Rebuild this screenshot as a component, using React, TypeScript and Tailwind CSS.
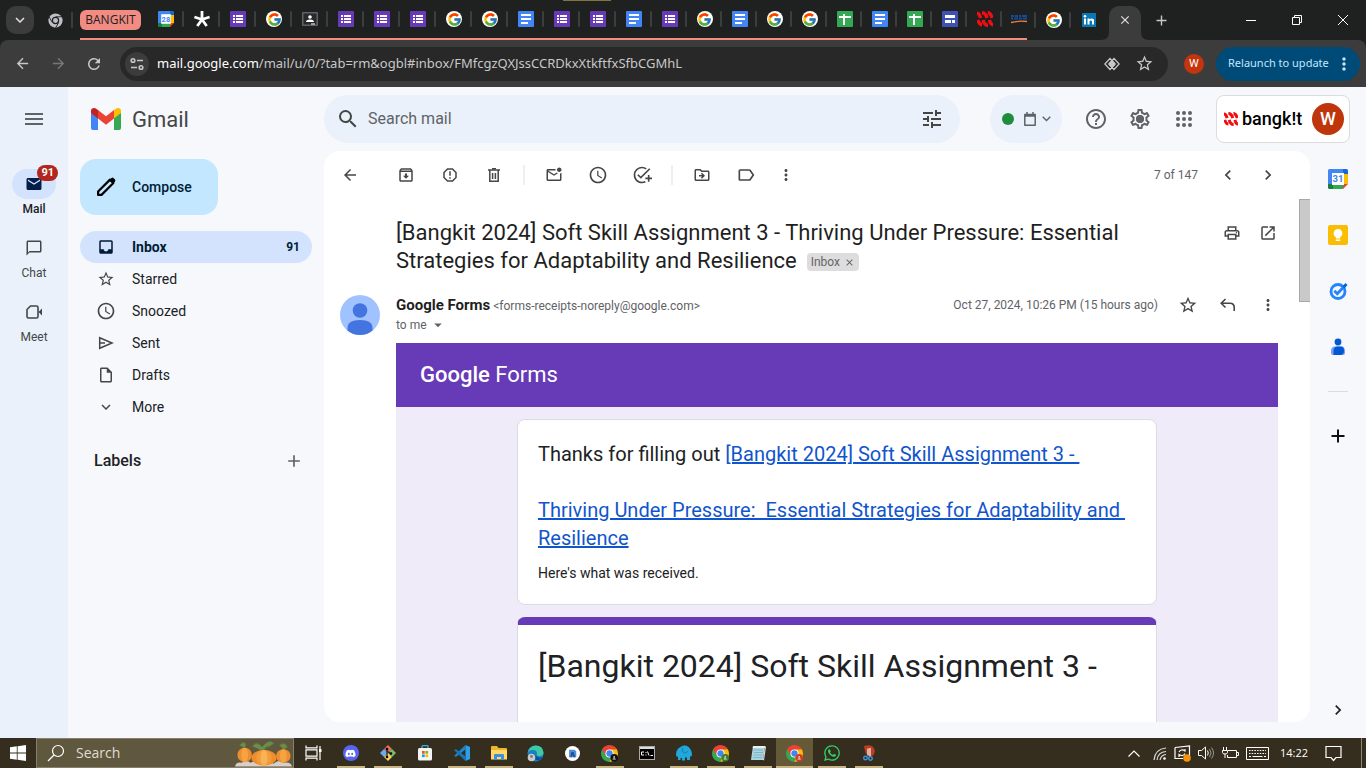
import type { ReactNode } from 'react';
import {
  MdAdd, MdArrowBack, MdArrowDropDown, MdChevronLeft, MdChevronRight, MdClose,
  MdExpandMore, MdHelpOutline, MdInbox, MdLabelOutline, MdMail, MdMenu,
  MdMoreVert, MdOpenInNew, MdOutlineAddTask, MdOutlineArchive, MdOutlineChatBubbleOutline,
  MdOutlineDriveFileMove, MdOutlineInsertDriveFile, MdOutlineMarkEmailUnread,
  MdOutlinePrint, MdOutlineSettings, MdReportGmailerrorred, MdSchedule, MdSearch,
  MdStarBorder, MdTune, MdArrowForward, MdRefresh,
} from 'react-icons/md';
import { FcGoogle } from 'react-icons/fc';
import { FaDiscord, FaWhatsapp } from 'react-icons/fa';

/* ---------- shared drawings ---------- */

function FormsIcon() {
  return (
    <svg width="16" height="16" viewBox="0 0 16 16">
      <rect width="16" height="16" rx="1" fill="#673ab7" />
      <path d="M3 4h2v2H3zM6 4h7v2H6zM3 7h2v2H3zM6 7h7v2H6zM3 10h2v2H3zM6 10h7v2H6z" fill="#fff" />
    </svg>
  );
}
function DocsIcon() {
  return (
    <svg width="16" height="16" viewBox="0 0 16 16">
      <rect width="16" height="16" rx="1" fill="#4285f4" />
      <path d="M3 3h10v2H3zM3 7h10v2H3zM3 11h7v2H3z" fill="#fff" />
    </svg>
  );
}
function SheetsIcon() {
  return (
    <svg width="16" height="16" viewBox="0 0 16 16">
      <rect width="16" height="16" rx="1" fill="#34a853" />
      <path d="M2 5h4V3h2v2h6v2H8v7H6V7H2z" fill="#fff" />
    </svg>
  );
}
function SitesIcon() {
  return (
    <svg width="16" height="16" viewBox="0 0 16 16">
      <rect width="16" height="16" rx="1" fill="#3f51b5" />
      <path d="M3 4h10v3H3zM3 9h6v3H3zM10 9h3v3h-3z" fill="#fff" />
    </svg>
  );
}
function GoogleIcon() {
  return (
    <span className="flex size-4 items-center justify-center rounded-full bg-white">
      <FcGoogle size={15} />
    </span>
  );
}
function CalendarIcon({ day, size }: { day: string; size: number }) {
  return (
    <svg width={size} height={size} viewBox="0 0 20 20">
      <path d="M1.500 0H15v5H5v10H0V1.500Q0 0 1.500 0z" fill="#4285f4" />
      <path d="M15 0h3.500Q20 0 20 1.500V5h-5z" fill="#1967d2" />
      <path d="M15 5h5v10h-5z" fill="#fbbc04" />
      <path d="M5 15h10v5H5z" fill="#34a853" />
      <path d="M0 15h5v5H1.500Q0 20 0 18.500z" fill="#188038" />
      <path d="M15 15h5l-5 5z" fill="#ea4335" />
      <path d="M4 4h12v12H4z" fill="#fff" />
      <text x="9.900" y="13.300" textAnchor="middle" fontSize="9.500" fontWeight="700" fontFamily="Roboto, sans-serif" fill="#4285f4">{day}</text>
    </svg>
  );
}
function StripesIcon({ size }: { size: number }) {
  return (
    <svg width={size} height={size} viewBox="0 0 16 16" fill="none" stroke="#f20d12" strokeWidth="3.400">
      <path d="M0 2.200q2.500 0 3.500 4.800M5 1.700q3.700 0 5 5.300M10.800 1.700q2.800 0 4.400 5.300" />
      <path d="M.8 9q1.700 4.800 4.200 4.800M6 9q1.300 5.300 5 5.300M12.500 9q1 4.800 3.500 4.800" />
    </svg>
  );
}
function AsteriskIcon() {
  return (
    <svg width="16" height="16" viewBox="0 0 16 16" stroke="#fff" strokeWidth="2.800">
      <path d="M8 8.500V0M8 8.500l7.600-2.500M8 8.500l4.700 6.500M8 8.500l-4.700 6.500M8 8.500L.4 6" />
    </svg>
  );
}
function ClassroomIcon() {
  return (
    <svg width="16" height="16" viewBox="0 0 16 16">
      <rect y="1" width="16" height="14" rx="1" fill="#5f6368" />
      <rect x="1.500" y="2.500" width="13" height="11" fill="#27292b" />
      <circle cx="8" cy="6" r="1.800" fill="#fff" />
      <path d="M4 11q0-2.500 4-2.500t4 2.500zM9 12.500h4v1H9z" fill="#fff" />
    </svg>
  );
}
function CampusIcon() {
  return (
    <svg width="16" height="16" viewBox="0 0 16 16">
      <path d="M0 5h3M4 5h3M8 5h2M11 5h5M0 7.500h2M3 7.500h4M8 7.500h3M12 7.500h4" stroke="#174a9c" strokeWidth="2" />
      <path d="M0 11.500Q8 9.500 16 10.500" stroke="#e8833a" strokeWidth="1.300" fill="none" />
    </svg>
  );
}
function LinkedInIcon() {
  return (
    <svg width="16" height="16" viewBox="0 0 16 16">
      <rect x="1" y="1" width="14" height="14" fill="#0a77b5" />
      <path d="M3 6.500h2v6H3zM6.500 6.500h2v1q2-2 4.500 0v5h-2V9q-1.200-1.200-2.500 0v3.500h-2z" fill="#fff" />
      <circle cx="4" cy="4.300" r="1.300" fill="#fff" />
    </svg>
  );
}
function ChromeIcon({ size, badge, mono }: { size: number; badge?: string; mono?: boolean }) {
  if (mono) {
    return (
      <svg width={size} height={size} viewBox="0 0 20 20">
        <circle cx="10" cy="10" r="9.500" fill="#bdc1c6" />
        <path d="M10 5h9M5.700 12.500L1.300 5M14.300 12.500L10 20" stroke="#1f2120" strokeWidth="1.200" />
        <circle cx="10" cy="10" r="4.900" fill="#1f2120" />
        <circle cx="10" cy="10" r="3.300" fill="#bdc1c6" />
      </svg>
    );
  }
  return (
    <svg width={size} height={size} viewBox="0 0 20 20">
      <path d="M10 10L1.340 5A10 10 0 0 1 18.660 5z" fill="#ea4335" />
      <path d="M10 10L18.660 5A10 10 0 0 1 10 20z" fill="#fbbc04" />
      <path d="M10 10v10A10 10 0 0 1 1.340 5z" fill="#34a853" />
      <path d="M10 5h8.660L14.300 12.500zM14.300 12.500L10 20 5.700 12.500z" fill="#fbbc04" />
      <path d="M5.700 12.500L1.340 5l-.3 6 4 6.500L10 20l1.500-5z" fill="#34a853" />
      <path d="M1.340 5L5.700 12.500 10 5h8.660L14 1.500H6z" fill="#ea4335" />
      <circle cx="10" cy="10" r="4.800" fill="#fff" />
      <circle cx="10" cy="10" r="3.700" fill="#4285f4" />
      {badge && <circle cx="15.500" cy="15" r="4.500" fill={badge} />}
      {badge && <path d="M13.500 17q0-1.500 2-1.500t2 1.500zM14.500 14a1 1 0 1 0 2 0 1 1 0 1 0-2 0" fill="#ddd" />}
    </svg>
  );
}

/* ---------- browser chrome ---------- */

const WIDE_TABS: [string, ReactNode][] = [
  ['Calendar', <CalendarIcon day="28" size={16} />], ['Dashboard', <AsteriskIcon />], ['Form', <FormsIcon />],
  ['Google', <GoogleIcon />], ['Classroom', <ClassroomIcon />], ['Form', <FormsIcon />], ['Form', <FormsIcon />],
  ['Form', <FormsIcon />], ['Google', <GoogleIcon />], ['Google', <GoogleIcon />], ['Docs', <DocsIcon />],
  ['Form', <FormsIcon />], ['Form', <FormsIcon />], ['Docs', <DocsIcon />],
];
const NARROW_TABS: [string, ReactNode][] = [
  ['Form', <FormsIcon />], ['Google', <GoogleIcon />], ['Docs', <DocsIcon />], ['Google', <GoogleIcon />],
  ['Google', <GoogleIcon />], ['Sheets', <SheetsIcon />], ['Docs', <DocsIcon />], ['Sheets', <SheetsIcon />],
  ['Sites', <SitesIcon />], ['Bangkit', <StripesIcon size={16} />],
];
const LOOSE_TABS: [string, ReactNode][] = [['Google', <GoogleIcon />], ['LinkedIn', <LinkedInIcon />]];

function Tab({ name, icon, wide, last }: { name: string; icon: ReactNode; wide?: boolean; last?: boolean }) {
  return (
    <button aria-label={name} className={`relative flex h-full items-center justify-center ${wide ? 'w-9' : 'w-[35px]'}`}>
      {icon}
      {!last && <span className="absolute right-0 h-4 w-0.5 rounded bg-[#3c3d3d]" />}
    </button>
  );
}

function TabStrip() {
  return (
    <div className="relative flex h-10 shrink-0 bg-[#1f2120]">
      <span className="absolute left-[563px] top-0 h-px w-12 bg-[#83743f]" />
      <button aria-label="Search tabs" className="ml-1.5 mt-1.5 flex size-7 items-center justify-center rounded-[10px] bg-[#3c3c3c] text-[#e3e3e3]">
        <MdExpandMore size={18} />
      </button>
      <button aria-label="Chrome" className="relative ml-[3px] flex w-9 items-center justify-center">
        <ChromeIcon size={15} mono />
        <span className="absolute right-0 h-4 w-0.5 rounded bg-[#3c3d3d]" />
      </button>
      <div className="ml-[7px] flex border-b-2 border-[#f28b82]">
        <button className="mr-[7px] mt-2.5 h-5 w-[61px] rounded-md bg-[#f28b82] text-center font-['Open_Sans',sans-serif] text-xs leading-5 text-[#202124]">
          BANGKIT
        </button>
        {WIDE_TABS.map(([n, i], k) => <Tab key={k} name={n} icon={i} wide />)}
        {NARROW_TABS.map(([n, i], k) => <Tab key={k} name={n} icon={i} />)}
        <button aria-label="Campus" className="flex w-[25px] items-center justify-end"><CampusIcon /></button>
      </div>
      <div className="flex items-center">
        <span className="ml-[7px] h-4 w-0.5 rounded bg-[#3c3d3d]" />
        {LOOSE_TABS.map(([n, i], k) => <Tab key={k} name={n} icon={i} last={k === 1} />)}
      </div>
      <div className="-ml-[5px] flex items-end">
        <svg width="8" height="8" viewBox="0 0 8 8"><path d="M8 0v8H0q8 0 8-8z" fill="#3c3c3c" /></svg>
        <button aria-label="Close tab" className="flex h-[34px] w-8 items-center justify-center rounded-t-[10px] bg-[#3c3c3c] pb-1.5 text-[#e3e3e3]">
          <MdClose size={14} />
        </button>
        <svg width="8" height="8" viewBox="0 0 8 8"><path d="M0 0v8h8q-8 0-8-8z" fill="#3c3c3c" /></svg>
      </div>
      <button aria-label="New tab" className="flex w-6 items-center justify-center text-[#c7c7c7]"><MdAdd size={17} /></button>
      <div className="ml-auto flex text-white">
        <button aria-label="Minimize" className="flex w-[46px] items-center justify-center">
          <svg width="10" height="10" viewBox="0 0 10 10"><path d="M0 5.500h10" stroke="currentColor" /></svg>
        </button>
        <button aria-label="Restore" className="flex w-[46px] items-center justify-center">
          <svg width="10" height="10" viewBox="0 0 10 10" fill="none" stroke="currentColor"><path d="M.5 2.500h7v7h-7zM2.500 2.500v-2h7v7h-2" /></svg>
        </button>
        <button aria-label="Close" className="flex w-[46px] items-center justify-center">
          <svg width="10" height="10" viewBox="0 0 10 10" fill="none" stroke="currentColor"><path d="M0 0l10 10M10 0L0 10" /></svg>
        </button>
      </div>
    </div>
  );
}

function AddressBar() {
  return (
    <div className="shrink-0 bg-[#1f2120]">
      <div className="flex h-[47px] items-center rounded-t-lg bg-[#3c3c3c] text-[#c7c7c7]">
        <button aria-label="Back" className="ml-1 flex size-9 items-center justify-center"><MdArrowBack size={17} /></button>
        <button aria-label="Forward" className="flex size-9 items-center justify-center text-[#777777]"><MdArrowForward size={17} /></button>
        <button aria-label="Reload" className="flex size-9 items-center justify-center"><MdRefresh size={18} /></button>
        <div className="ml-2 flex h-[34px] flex-1 items-center rounded-full bg-[#282828] pl-[5px] pr-3.5">
          <button aria-label="Site information" className="flex size-6 items-center justify-center rounded-full bg-[#3c3c3c]">
            <svg width="14" height="14" viewBox="0 0 14 14" fill="none" stroke="currentColor" strokeWidth="1.600">
              <circle cx="3" cy="3.500" r="1.800" /><path d="M7 3.500h6M1 10.500h6" /><circle cx="11" cy="10.500" r="1.800" />
            </svg>
          </button>
          <p className="ml-2 flex-1 font-['Noto_Sans',sans-serif] text-[13px] text-[#c7c7c7]">
            <span className="text-white">mail.google.com</span>/mail/u/0/?tab=rm&amp;ogbl#inbox/FMfcgzQXJssCCRDkxXtkftfxSfbCGMhL
          </p>
          <button aria-label="Lens" className="mr-[15px]">
            <svg width="16" height="16" viewBox="0 0 16 16" fill="none" stroke="currentColor" strokeWidth="1.300">
              <path d="M6 2.500L.8 8 6 13.500 11 8zM10 2.500L15.200 8 10 13.500 5 8z" />
              <path d="M8 4.500L11 8l-3 3.500L5 8z" fill="currentColor" />
            </svg>
          </button>
          <button aria-label="Bookmark"><MdStarBorder size={19} /></button>
        </div>
        <button aria-label="Profile" className="ml-4 mr-3 size-5 rounded-full bg-[#c5350d] text-center font-['Roboto',sans-serif] text-[11px] leading-5 text-white">W</button>
        <button className="mr-1.5 flex h-[34px] w-36 items-center justify-between rounded-full bg-[#004a77] pl-3 pr-1.5 font-['Noto_Sans',sans-serif] text-[11px] text-[#c2e7ff]">
          Relaunch to update <MdMoreVert size={20} />
        </button>
      </div>
    </div>
  );
}

/* ---------- mail ---------- */

function Rail() {
  const items: { label: string; icon: ReactNode; active?: boolean }[] = [
    { label: 'Mail', icon: <MdMail size={18} />, active: true },
    { label: 'Chat', icon: <MdOutlineChatBubbleOutline size={18} /> },
    {
      label: 'Meet',
      icon: (
        <svg width="18" height="18" viewBox="0 0 18 18" fill="none" stroke="currentColor" strokeWidth="1.600">
          <path d="M5.500 3h6Q13 3 13 4.500v9q0 1.500-1.500 1.500h-8Q2 15 2 13.500V6.500z" strokeLinejoin="round" />
          <path d="M13.500 9L17 5.500v7z" fill="currentColor" stroke="none" />
        </svg>
      ),
    },
  ];
  return (
    <nav aria-label="Apps" className="flex w-[68px] shrink-0 flex-col items-center bg-[#eaf1fb] text-[#444746]">
      <button aria-label="Main menu" className="flex h-16 items-center text-[#5f6368]"><MdMenu size={24} /></button>
      <div className="mt-[18px]">
        {items.map((it) => (
          <a key={it.label} href="#" className="block h-16 text-center">
            <span className={`relative flex h-[30px] w-11 items-center justify-center rounded-full ${it.active ? 'bg-[#d3e3fd] text-[#041e49]' : ''}`}>
              {it.icon}
              {it.active && (
                <span className="absolute -right-0.5 -top-1 rounded-full bg-[#b3261e] px-1 text-[11px] font-bold leading-4 text-white">91</span>
              )}
            </span>
            <span className={`mt-0.5 block text-xs leading-4 ${it.active ? 'font-medium text-[#202124]' : ''}`}>{it.label}</span>
          </a>
        ))}
      </div>
    </nav>
  );
}

function GmailLogo() {
  return (
    <svg width="30" height="22" viewBox="0 0 30 22">
      <path d="M0 4v16q0 2 2 2h5V8z" fill="#4285f4" />
      <path d="M30 4v16q0 2-2 2h-5V8z" fill="#34a853" />
      <path d="M7 2l8 6.200L23 2v8.500l-8 6.200-8-6.200z" fill="#ea4335" />
      <path d="M0 5V3q0-3 3-3 1.300 0 2.500 1L7 2.100v8.400z" fill="#c5221f" />
      <path d="M30 5V3q0-3-3-3-1.300 0-2.500 1L23 2.100v8.400z" fill="#fbbc04" />
    </svg>
  );
}

function Header() {
  return (
    <header className="flex h-16 shrink-0 items-center">
      <a href="#" className="flex w-64 shrink-0 items-center gap-[11px] pl-[23px] text-[22px] text-[#444746]">
        <GmailLogo />
        Gmail
      </a>
      <form className="flex h-12 flex-1 items-center rounded-full bg-[#eaf1fb] pl-3 pr-4 text-[#444746]">
        <MdSearch size={24} />
        <input type="text" aria-label="Search mail" placeholder="Search mail" className="ml-2 min-w-0 flex-1 bg-transparent text-base outline-none placeholder:text-[#5f6368]" />
        <button type="button" aria-label="Show search options"><MdTune size={24} /></button>
      </form>
      <button aria-label="Status: active" className="ml-[30px] flex h-12 w-[72px] items-center justify-center gap-2.5 rounded-full bg-[#eaf1fb] text-[#5f6368]">
        <span className="size-3 rounded-full bg-[#1e8e3e]" />
        <span className="flex items-center gap-1.5">
          <svg width="12" height="14" viewBox="0 0 12 14" fill="none" stroke="currentColor" strokeWidth="1.500">
            <path d="M.8 2.500h10.400v10.700H.8z" strokeLinejoin="round" /><path d="M.8 3.500h10.400" strokeWidth="2.500" /><path d="M3 0v2M9 0v2" />
          </svg>
          <svg width="9" height="6" viewBox="0 0 9 6" fill="none" stroke="currentColor" strokeWidth="1.400"><path d="M.7.8l3.800 3.800L8.300.8" /></svg>
        </span>
      </button>
      <div className="ml-3 flex text-[#5f6368]">
        <button aria-label="Support" className="flex size-11 items-center justify-center"><MdHelpOutline size={24} /></button>
        <button aria-label="Settings" className="flex size-11 items-center justify-center">
          <span className="relative flex items-center justify-center"><MdOutlineSettings size={24} /><span className="absolute size-2 rounded-full bg-[#5f6368]" /></span>
        </button>
        <button aria-label="Google apps" className="flex size-11 items-center justify-center">
          <svg width="16" height="16" viewBox="0 0 16 16" fill="currentColor">
            {[2, 8, 14].map((y) => [2, 8, 14].map((x) => <circle key={`${x}-${y}`} cx={x} cy={y} r="2" />))}
          </svg>
        </button>
      </div>
      <button aria-label="Account" className="ml-2.5 mr-4 flex h-12 w-[134px] items-center rounded-lg border border-[#dadce0] bg-white pl-[7px] pr-[5px]">
        <StripesIcon size={14} />
        <span className="ml-1 text-lg font-medium leading-6 text-black">bangk!t</span>
        <span className="ml-auto size-8 rounded-full bg-[#bf360c] text-center text-lg font-medium leading-8 text-white">W</span>
      </button>
    </header>
  );
}

function Sidebar() {
  const items: { label: string; icon: ReactNode; active?: boolean }[] = [
    { label: 'Inbox', icon: <MdInbox size={18} />, active: true },
    { label: 'Starred', icon: <MdStarBorder size={18} /> },
    { label: 'Snoozed', icon: <MdSchedule size={20} /> },
    {
      label: 'Sent',
      icon: (
        <svg width="16" height="14" viewBox="0 0 16 14" fill="none" stroke="currentColor" strokeWidth="1.500">
          <path d="M1.700 1.700L14 7 1.700 12.300zM2 7h5" />
        </svg>
      ),
    },
    { label: 'Drafts', icon: <MdOutlineInsertDriveFile size={18} /> },
    { label: 'More', icon: <MdExpandMore size={18} /> },
  ];
  return (
    <aside className="w-64 shrink-0 pl-3 pr-3 pt-2">
      <button className="flex h-14 items-center gap-3.5 rounded-2xl bg-[#c2e7ff] pl-3.5 pr-[26px] text-sm font-medium text-[#001d35]">
        <svg width="24" height="24" viewBox="0 0 24 24" fill="none" stroke="#000" strokeWidth="2.200">
          <path d="M4.100 16.500L16 4.600l3.400 3.400L7.500 19.900H4.100z" strokeLinejoin="round" />
          <path d="M15.200 5.200L17.500 3q1-.8 2 0l1.500 1.500q.8 1 0 2l-2.200 2.300z" fill="#000" stroke="none" />
        </svg>
        Compose
      </button>
      <ul className="mt-4">
        {items.map((it) => (
          <li key={it.label}>
            <a href="#" className={`flex h-8 items-center rounded-full pr-3 text-sm ${it.active ? 'bg-[#d3e3fd] font-bold text-[#001d35]' : 'text-[#202124]'}`}>
              <span className={`flex w-[52px] justify-center ${it.active ? '' : 'text-[#444746]'}`}>{it.icon}</span>
              {it.label}
              {it.active && <span className="ml-auto text-xs">91</span>}
            </a>
          </li>
        ))}
      </ul>
      <div className="mt-6 flex h-7 items-center justify-between pl-3.5 pr-2">
        <h2 className="text-base font-medium text-[#202124]">Labels</h2>
        <button aria-label="Create new label" className="text-[#5f6368]"><MdAdd size={20} /></button>
      </div>
    </aside>
  );
}

function Tool({ label, children, narrow }: { label: string; children: ReactNode; narrow?: boolean }) {
  return (
    <button aria-label={label} className={`flex h-10 items-center justify-center ${narrow ? 'w-9' : 'w-11'}`}>{children}</button>
  );
}

function Toolbar() {
  const rule = <span className="mx-[7px] h-5 w-0.5 bg-[#efefef]" />;
  return (
    <div className="flex h-12 shrink-0 items-center pl-2 pr-[22px] text-[#444746]">
      <Tool label="Back to Inbox" narrow><MdArrowBack size={18} /></Tool>
      <div className="ml-4 flex items-center">
        <Tool label="Archive"><MdOutlineArchive size={18} /></Tool>
        <Tool label="Report spam"><MdReportGmailerrorred size={18} /></Tool>
        <Tool label="Delete">
          <svg width="12" height="14" viewBox="0 0 12 14" fill="none" stroke="currentColor" strokeWidth="1.500">
            <path d="M1.800 2v11.200h8.400V2M0 2h12" /><path d="M4 .7h4" /><path d="M4.600 5v6M7.400 5v6" />
          </svg>
        </Tool>
        {rule}
        <Tool label="Mark as unread"><MdOutlineMarkEmailUnread size={18} /></Tool>
        <Tool label="Snooze"><MdSchedule size={20} /></Tool>
        <Tool label="Add to Tasks"><MdOutlineAddTask size={20} /></Tool>
        {rule}
        <Tool label="Move to"><MdOutlineDriveFileMove size={18} /></Tool>
        <Tool label="Labels"><MdLabelOutline size={20} /></Tool>
        <Tool label="More" narrow><MdMoreVert size={18} /></Tool>
      </div>
      <span className="ml-auto mr-2.5 text-xs text-[#5f6368]">7 of 147</span>
      <button aria-label="Newer" className="flex size-10 items-center justify-center"><MdChevronLeft size={20} /></button>
      <button aria-label="Older" className="flex size-10 items-center justify-center"><MdChevronRight size={20} /></button>
    </div>
  );
}

function Message() {
  return (
    <article className="min-w-0 flex-1 overflow-hidden pl-4">
      <div className="flex pl-14 pr-[13px] pt-5">
        <div className="flex-1 pr-6 text-[22px] leading-7 text-[#1f1f1f]">
          <h1 className="inline">
            [Bangkit 2024] Soft Skill Assignment 3 - Thriving Under Pressure: Essential Strategies for Adaptability and Resilience
          </h1>
          <span className="ml-2.5 inline-flex h-[18px] items-center gap-1 rounded bg-[#dddddd] px-1 align-middle text-xs text-[#666666]">
            Inbox
            <button aria-label="Remove label Inbox"><MdClose size={11} /></button>
          </span>
        </div>
        <button aria-label="Print" className="flex h-7 w-9 items-center justify-center text-[#444746]"><MdOutlinePrint size={18} /></button>
        <button aria-label="Open in new window" className="flex h-7 w-9 items-center justify-center text-[#444746]"><MdOpenInNew size={18} /></button>
      </div>
      <div className="mt-5 flex pr-[11px]">
        <svg width="40" height="40" viewBox="0 0 40 40" className="shrink-0">
          <circle cx="20" cy="20" r="20" fill="#a0c3ff" />
          <circle cx="20" cy="15.500" r="7.300" fill="#4374e0" />
          <path d="M7.500 35.500V33q0-8 12.500-8t12.500 8v2.500Q27 40 20 40T7.500 35.500z" fill="#4374e0" />
        </svg>
        <div className="ml-4 flex-1">
          <p className="h-5 text-xs leading-5 text-[#5f6368]">
            <span className="text-[15px] font-bold leading-5 text-[#1f1f1f]">Google Forms</span> &lt;forms-receipts-noreply@google.com&gt;
          </p>
          <button className="flex h-5 items-center gap-0.5 text-xs text-[#5f6368]">
            to me <MdArrowDropDown size={18} />
          </button>
        </div>
        <span className="mr-2.5 text-xs leading-5 text-[#5f6368]">Oct 27, 2024, 10:26 PM (15 hours ago)</span>
        <div className="flex h-5 text-[#444746]">
          <button aria-label="Star" className="flex w-10 items-center justify-center"><MdStarBorder size={20} /></button>
          <button aria-label="Reply" className="flex w-10 items-center justify-center">
            <svg width="16" height="14" viewBox="0 0 16 14" fill="none" stroke="currentColor" strokeWidth="1.600"><path d="M5.500 1L1.200 5.200l4.300 4.300M1.500 5.200h8.500q4.200 0 4.200 4.300V13" /></svg>
          </button>
          <button aria-label="More" className="flex w-10 items-center justify-center"><MdMoreVert size={18} /></button>
        </div>
      </div>
      <div className="ml-14 mr-[21px] mt-2">
        <div className="flex h-16 items-center bg-[#673ab7] pb-0.5 pl-6 text-[22px] text-white">
          <span className="font-medium">Google</span>&nbsp;<span>Forms</span>
        </div>
        <div className="bg-[#f0ebf8] pt-3">
          <div className="mx-auto max-w-[640px] rounded-lg border border-[#dadce0] bg-white px-5 pb-[21px] pt-5 text-[#202124]">
            <p className="text-xl leading-7">
              Thanks for filling out{' '}
              <a href="#" className="text-[#1155cc] underline">
                <span className="whitespace-pre">{'[Bangkit 2024] Soft Skill Assignment 3 - '}</span>
                <br /><br />
                <span className="whitespace-pre-wrap">{'Thriving Under Pressure:  Essential Strategies for Adaptability and Resilience'}</span>
              </a>
            </p>
            <p className="mt-[11px] text-sm leading-5">Here's what was received.</p>
          </div>
          <div className="mx-auto mt-3 max-w-[640px] rounded-lg border border-t-8 border-[#dadce0] border-t-[#673ab7] bg-white px-5 pb-24 pt-[21px] text-[#202124]">
            <h2 className="text-[32px] leading-10">[Bangkit 2024] Soft Skill Assignment 3 -</h2>
          </div>
        </div>
      </div>
    </article>
  );
}

function SidePanel() {
  return (
    <aside className="flex w-14 shrink-0 flex-col items-center">
      <button aria-label="Calendar" className="flex h-14 items-center"><CalendarIcon day="31" size={20} /></button>
      <button aria-label="Keep" className="flex h-14 items-center">
        <svg width="20" height="20" viewBox="0 0 20 20">
          <rect width="20" height="20" rx="2" fill="#fbbc04" />
          <path d="M10 4a4.300 4.300 0 0 1 2.200 8v1.500H7.800V12A4.300 4.300 0 0 1 10 4zM7.800 14.500h4.400V16H7.800z" fill="#fff" />
        </svg>
      </button>
      <button aria-label="Tasks" className="flex h-14 items-center">
        <svg width="20" height="20" viewBox="0 0 20 20" fill="none">
          <circle cx="10" cy="10.500" r="7" stroke="#2684fc" strokeWidth="2.800" />
          <path d="M6.300 9.800l3 3 8-8.500" stroke="#2684fc" strokeWidth="2.800" />
          <path d="M14.500 5.500l3-3.500 2 2-3.300 3.500z" fill="#0066da" />
        </svg>
      </button>
      <button aria-label="Contacts" className="flex h-14 items-center">
        <svg width="20" height="20" viewBox="0 0 20 20">
          <circle cx="10" cy="5" r="3.400" fill="#0058d4" />
          <path d="M3 14q0-4.500 4-4.500h6q4 0 4 4.500v2q0 2-2 2H5q-2 0-2-2z" fill="#7b9cf5" />
          <path d="M5.500 18v-4q0-4.500 4-4.500H13q3 0 3 4t-3 4.500z" fill="#0058d4" />
        </svg>
      </button>
      <span className="mt-4 h-px w-5 bg-[#dadce0]" />
      <button aria-label="Get add-ons" className="mt-[34px]">
        <svg width="20" height="20" viewBox="0 0 20 20" stroke="#111" strokeWidth="2"><path d="M3.500 10h13M10 3.500v13" /></svg>
      </button>
      <button aria-label="Hide side panel" className="mb-[18px] mt-auto text-[#202124]"><MdChevronRight size={20} /></button>
    </aside>
  );
}

/* ---------- taskbar ---------- */

function Pumpkins() {
  return (
    <svg width="58" height="28" viewBox="0 0 60 28">
      <path d="M0 28q1-5 7-4 4-4 9 0 6-3 12 1 6-4 12 0 5-5 10-1 8-1 9 4z" fill="#d8d0c8" />
      <path d="M5 6q4-5 6-1l-1 4M18 7q5-6 10 1 7-9 12-4-3 3-8 4l-3 4M46 6q6-4 8 2l-4 2" fill="#6b8f4a" stroke="#5b7f3d" />
      <ellipse cx="10" cy="16" rx="7.500" ry="7.500" fill="#ee8d2b" />
      <ellipse cx="10" cy="16" rx="3.500" ry="7.500" fill="#f6a343" />
      <ellipse cx="50" cy="17" rx="7.500" ry="7" fill="#ee8d2b" />
      <ellipse cx="50" cy="17" rx="3.500" ry="7" fill="#f6a343" />
      <ellipse cx="30" cy="19" rx="13" ry="8" fill="#ee8d2b" />
      <ellipse cx="30" cy="19" rx="8" ry="8" fill="#f39c3a" />
      <ellipse cx="30" cy="19" rx="3.500" ry="8" fill="#fab257" />
    </svg>
  );
}

const TASKS: { name: string; icon: ReactNode; open?: boolean; active?: boolean }[] = [
  {
    name: 'Discord', open: true,
    icon: <span className="flex size-4 items-center justify-center rounded-full bg-[#5865f2] text-white"><FaDiscord size={11} /></span>,
  },
  {
    name: 'Git', open: true,
    icon: (
      <svg width="16" height="16" viewBox="0 0 16 16">
        <path d="M8 0l4 4-4 4-4-4z" fill="#ef6b62" /><path d="M4 4l4 4-4 4-4-4z" fill="#6fa8f0" />
        <path d="M12 4l4 4-4 4-4-4z" fill="#77c267" /><path d="M8 8l4 4-4 4-4-4z" fill="#f4d35e" />
        <path d="M7 4v8M7 6l4 3" stroke="#222" strokeWidth="1.200" fill="none" /><circle cx="7" cy="12" r="1.300" /><circle cx="11" cy="8.500" r="1.300" /><circle cx="7" cy="4" r="1.300" />
      </svg>
    ),
  },
  {
    name: 'Microsoft Store',
    icon: (
      <svg width="16" height="16" viewBox="0 0 16 16">
        <path d="M5 4V1.500q0-.8 1-.8h4q1 0 1 .8V4" fill="none" stroke="#35b3ee" strokeWidth="1.300" />
        <rect x="1" y="3" width="14" height="12.500" rx="1.500" fill="#f4f4f4" />
        <path d="M5 6h2.700v2.700H5z" fill="#f25022" /><path d="M8.400 6h2.700v2.700H8.400z" fill="#7fba00" />
        <path d="M5 9.400h2.700v2.700H5z" fill="#00a4ef" /><path d="M8.400 9.400h2.700v2.700H8.400z" fill="#ffb900" />
      </svg>
    ),
  },
  {
    name: 'Visual Studio Code', open: true,
    icon: (
      <svg width="16" height="16" viewBox="0 0 16 16">
        <path d="M11.500 0L16 2v12l-4.500 2z" fill="#2ba0ea" />
        <path d="M11.500 0v4.500L1.800 12 .2 10.800z" fill="#1b86cf" />
        <path d="M11.500 16v-4.500L1.800 4 .2 5.200z" fill="#1377c0" />
      </svg>
    ),
  },
  {
    name: 'File Explorer', open: true,
    icon: (
      <svg width="16" height="16" viewBox="0 0 16 16">
        <path d="M0 2q0-1 1-1h5l1.500 2H15q1 0 1 1v10H0z" fill="#f0b429" /><path d="M0 5h16v9.500H0z" fill="#ffd968" />
        <path d="M3 15v-5q0-1 1-1h8q1 0 1 1v5h-3v-3H6v3z" fill="#3d8fe0" />
      </svg>
    ),
  },
  {
    name: 'Edge',
    icon: (
      <svg width="17" height="17" viewBox="0 0 17 17">
        <circle cx="8.500" cy="8.500" r="8" fill="#1780c9" /><path d="M.5 8Q2 1 8.500.5q7.500 0 8 7 0 4-4.500 3.500-3 0-2-2.500 0-4-4.500-3.500Q1.500 5 .5 8z" fill="#3fc8a5" />
        <path d="M6 8q-1 6 5 7.500 3.500-.5 5-3.500-4 2-7-1z" fill="#0c4f97" /><circle cx="4.500" cy="12.500" r="3.800" fill="#c9c9c9" /><circle cx="4.500" cy="11.500" r="1.400" fill="#777" />
      </svg>
    ),
  },
  {
    name: 'Android Emulator',
    icon: (
      <svg width="15" height="15" viewBox="0 0 14 14">
        <circle cx="7" cy="7" r="7" fill="#fff" /><path d="M3.800 3.500h5l1.700 1.500v5.500H3.800z" fill="#4d8fd6" />
        <path d="M5 10.500l1-5h2l1.500 5H8L7 8l-.7 2.500z" fill="#1c4f91" />
      </svg>
    ),
  },
  { name: 'Chrome', open: true, icon: <ChromeIcon size={17} badge="#111" /> },
  {
    name: 'Command Prompt',
    icon: (
      <svg width="16" height="14" viewBox="0 0 16 14">
        <rect x=".5" y=".5" width="15" height="13" fill="#000" stroke="#aaa" /><path d="M1 2h14" stroke="#ddd" strokeWidth="2" />
        <path d="M5 6H2.500v3H5M7 6v1M7 8.500v1M8.500 5.500l1.500 4M11.500 9.500H14" stroke="#fff" fill="none" />
      </svg>
    ),
  },
  {
    name: 'Elephant', open: true,
    icon: (
      <svg width="16" height="16" viewBox="0 0 16 16">
        <path d="M0 10Q0 4 4.500 2 8-.5 12 1.500q4 3 4 8.500-.5 2-2 1.500V15h-3v-2.500H9V15.500H6V13H4.500v2H2v-3.500Q.3 12.500 0 10z" fill="#20a8dc" />
        <path d="M7 2.500q-2 4 1.500 5.500 2.500.5 3-2" fill="none" stroke="#137fae" />
      </svg>
    ),
  },
  { name: 'Chrome', open: true, icon: <ChromeIcon size={17} badge="#3b7d2c" /> },
  {
    name: 'Notepad', open: true,
    icon: (
      <svg width="16" height="16" viewBox="0 0 16 16">
        <path d="M3 1h12l-2 14H1z" fill="#a9d5df" /><path d="M3 1h12l-.3 2H2.700z" fill="#eee" /><path d="M4 5h9M4 7.500h9M3.500 10h9M3 12.500h9" stroke="#7fb4c2" /><path d="M13 15l2-14 1 1-2 13.500z" fill="#ddd" />
      </svg>
    ),
  },
  { name: 'Chrome', open: true, active: true, icon: <ChromeIcon size={17} badge="#d93a20" /> },
  { name: 'WhatsApp', open: true, icon: <FaWhatsapp size={18} color="#2fd366" /> },
  {
    name: 'Snipping Tool', open: true,
    icon: (
      <svg width="16" height="16" viewBox="0 0 16 16" fill="none">
        <path d="M3 1Q8-.5 11.500 1.500q4 4 1 8.500L9 12 4.500 8z" fill="#c33a1e" /><path d="M7 3.500v7M9 3v8" stroke="#ddd" strokeWidth="1.500" /><circle cx="4.500" cy="13" r="1.800" stroke="#3aa0e8" strokeWidth="1.300" /><circle cx="9.500" cy="13.500" r="1.800" stroke="#3aa0e8" strokeWidth="1.300" />
      </svg>
    ),
  },
];

function Taskbar() {
  return (
    <footer className="flex h-[30px] shrink-0 bg-[#352e1f] font-['Open_Sans',sans-serif] text-white">
      <button aria-label="Start" className="flex w-9 items-center justify-center">
        <svg width="16" height="16" viewBox="0 0 16 16" fill="#fff"><path d="M0 2.200L6.800 1.300v6.300H0zM7.600 1.200L16 0v7.600H7.600zM0 8.400h6.800v6.300L0 13.800zM7.600 8.400H16V16l-8.400-1.200z" /></svg>
      </button>
      <label className="flex w-[258px] items-center border border-[#857f6b] bg-[#5f583f] pl-2.5">
        <svg width="18" height="18" viewBox="0 0 18 18" fill="none" stroke="#fff" strokeWidth="1.200"><circle cx="11" cy="7" r="5.500" /><path d="M7 11L1 17" /></svg>
        <input type="text" aria-label="Search" placeholder="Search" className="ml-[11px] w-0 flex-1 bg-transparent text-sm outline-none placeholder:text-[#e0ddd2]" />
        <Pumpkins />
      </label>
      <button aria-label="Task view" className="flex w-[38px] items-center justify-center">
        <svg width="17" height="16" viewBox="0 0 17 16" fill="none" stroke="#fff" strokeWidth="1.200"><path d="M1 .5v2.300h11V.5M1 15.500v-2.300h11v2.300M1 4.900h11v6.200H1zM15 1v14" /><path d="M14 4h2.500v3H14z" fill="#fff" stroke="none" /></svg>
      </button>
      {TASKS.map((t, i) => (
        <button key={i} aria-label={t.name} className={`relative flex w-[37px] items-center justify-center ${t.active ? 'bg-[#655a38]' : ''}`}>
          {t.icon}
          {t.open && <span className={`absolute bottom-0 h-0.5 bg-[#c9b582] ${t.active ? 'w-full' : 'w-7'}`} />}
        </button>
      ))}
      <div className="ml-auto flex items-center gap-[7px]">
        <svg width="12" height="7" viewBox="0 0 12 7" fill="none" stroke="#fff" strokeWidth="1.200"><path d="M.5 6.500L6 1l5.500 5.500" /></svg>
        <svg width="14" height="13" viewBox="0 0 14 13" fill="none" stroke="#ddd" strokeWidth="1.200" className="ml-1.5"><path d="M1 13Q2 2 13 1M4 13q1-8 9-8.500M7 13q1-5 6-5.500" /><circle cx="11.500" cy="11.500" r="1.300" fill="#fff" stroke="none" /></svg>
        <svg width="17" height="17" viewBox="0 0 17 17" fill="none" stroke="#fff" strokeWidth="1.200"><path d="M1 2.500L15.500 1v11M1 2.500v11h8" /><path d="M5 7q2-3.500 6-1V4M11 8.500q-2 3.500-6 1V12" /><circle cx="13" cy="13" r="3.800" fill="#f7940a" stroke="none" /></svg>
        <svg width="17" height="14" viewBox="0 0 17 14" fill="none" stroke="#fff"><path d="M.5 4.500h3l4-3.500v12l-4-3.500h-3zM9.500 4.500q1.500 2.500 0 5" /><path d="M11.500 3q3 4 0 8M13.500 1.500q4 5.500 0 11" stroke="#998" /></svg>
        <svg width="17" height="12" viewBox="0 0 17 12" fill="none" stroke="#fff"><path d="M6 3.500h8.500v7h-9V8M15 5.500h1.500v3H15M1.500 0v3M4.500 0v3M.5 3.500h5v2q0 1.500-2.500 1.500T.5 5.500zM3 7v4" /></svg>
        <svg width="23" height="13" viewBox="0 0 23 13" fill="none" stroke="#fff"><path d="M.5.500h22v12H.5z" /><path d="M3 3.500h17M3 6.500h17" strokeDasharray="1.500 1.200" /><path d="M3 9.500h2M6.500 9.500h10M18 9.500h2" /></svg>
        <time className="ml-1 text-[11px]">14:22</time>
        <svg width="17" height="17" viewBox="0 0 17 17" fill="none" stroke="#fff" strokeWidth="1.200" className="ml-2.5"><path d="M1 1.500h15v11h-5L8.500 15.500 6 12.500H1z" /></svg>
        <span className="ml-3 mr-1 h-[30px] w-px bg-[#8b8676]" />
      </div>
    </footer>
  );
}

export default function App() {
  return (
    <div className="flex h-screen flex-col overflow-hidden">
      <TabStrip />
      <AddressBar />
      <main className="flex min-h-0 flex-1 bg-[#f6f8fc] font-['Roboto',sans-serif]">
        <Rail />
        <div className="flex min-w-0 flex-1 flex-col">
          <Header />
          <div className="flex min-h-0 flex-1">
            <Sidebar />
            <section className="mb-4 flex min-w-0 flex-1 flex-col overflow-hidden rounded-2xl bg-white">
              <Toolbar />
              <div className="flex min-h-0 flex-1">
                <Message />
                <div className="w-[11px] shrink-0" aria-hidden="true">
                  <div className="h-[103px] border border-r-0 border-[#a8a8a8] bg-[#c9c9c9]" />
                </div>
              </div>
            </section>
            <SidePanel />
          </div>
        </div>
      </main>
      <Taskbar />
    </div>
  );
}
